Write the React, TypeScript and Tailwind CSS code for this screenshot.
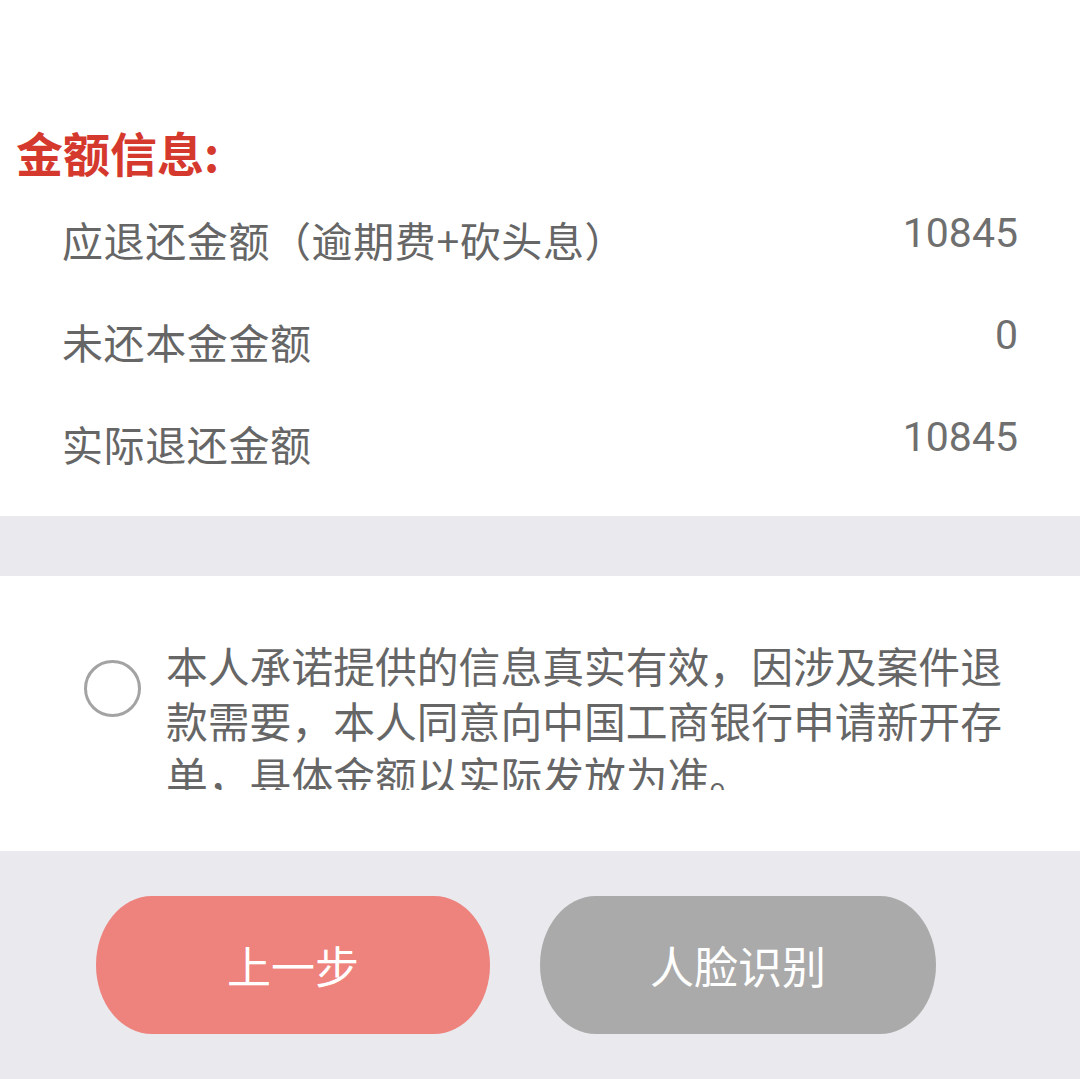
import React from 'react'

const cjk = "font-['Noto_Sans_CJK_SC',sans-serif]"

const rows = [
  { label: '应退还金额（逾期费+砍头息）', value: '10845' },
  { label: '未还本金金额', value: '0' },
  { label: '实际退还金额', value: '10845' },
]

const App = () => {
  return (
    <div className={`w-[1080px] h-[1079px] overflow-hidden bg-[#e9e9ee] ${cjk}`}>
      {/* amount info */}
      <div className="bg-white pt-[127px] pb-[22px]">
        <h2 className="pl-[16px] text-[47px] leading-[50px] font-bold text-[#d5392d] mb-[11px]">
          金额信息:
        </h2>
        {rows.map((row) => (
          <div key={row.label} className="flex justify-between h-[102px] pl-[62px] pr-[62px]">
            <span className="text-[41px] leading-[102px] text-[#666666] tracking-[0.6px]">{row.label}</span>
            <span className="font-['Roboto',sans-serif] text-[41px] leading-[90px] text-[#6f6f6f]">
              {row.value}
            </span>
          </div>
        ))}
      </div>

      <div className="h-[60px]" />

      {/* agreement */}
      <div className="bg-white h-[275px] flex items-start pl-[84px] pt-[84px]">
        <div className="w-[57px] h-[57px] rounded-full border-[3px] border-[#a3a3a3] shrink-0" />
        <p className="ml-[25px] w-[842px] h-[152px] overflow-hidden text-[41.8px] leading-[55px] text-[#666666] -mt-[22px]">
          本人承诺提供的信息真实有效，因涉及案件退款需要，本人同意向中国工商银行申请新开存单，具体金额以实际发放为准。
        </p>
      </div>

      {/* actions */}
      <div className="flex gap-[50px] pl-[96px] pt-[45px]">
        <button className="w-[394px] h-[138px] rounded-[56px/69px] bg-[#ee827d] text-white text-[44px]">
          上一步
        </button>
        <button className="w-[396px] h-[138px] rounded-[56px/69px] bg-[#aaaaaa] text-white text-[44px]">
          人脸识别
        </button>
      </div>
    </div>
  )
}

export default App
